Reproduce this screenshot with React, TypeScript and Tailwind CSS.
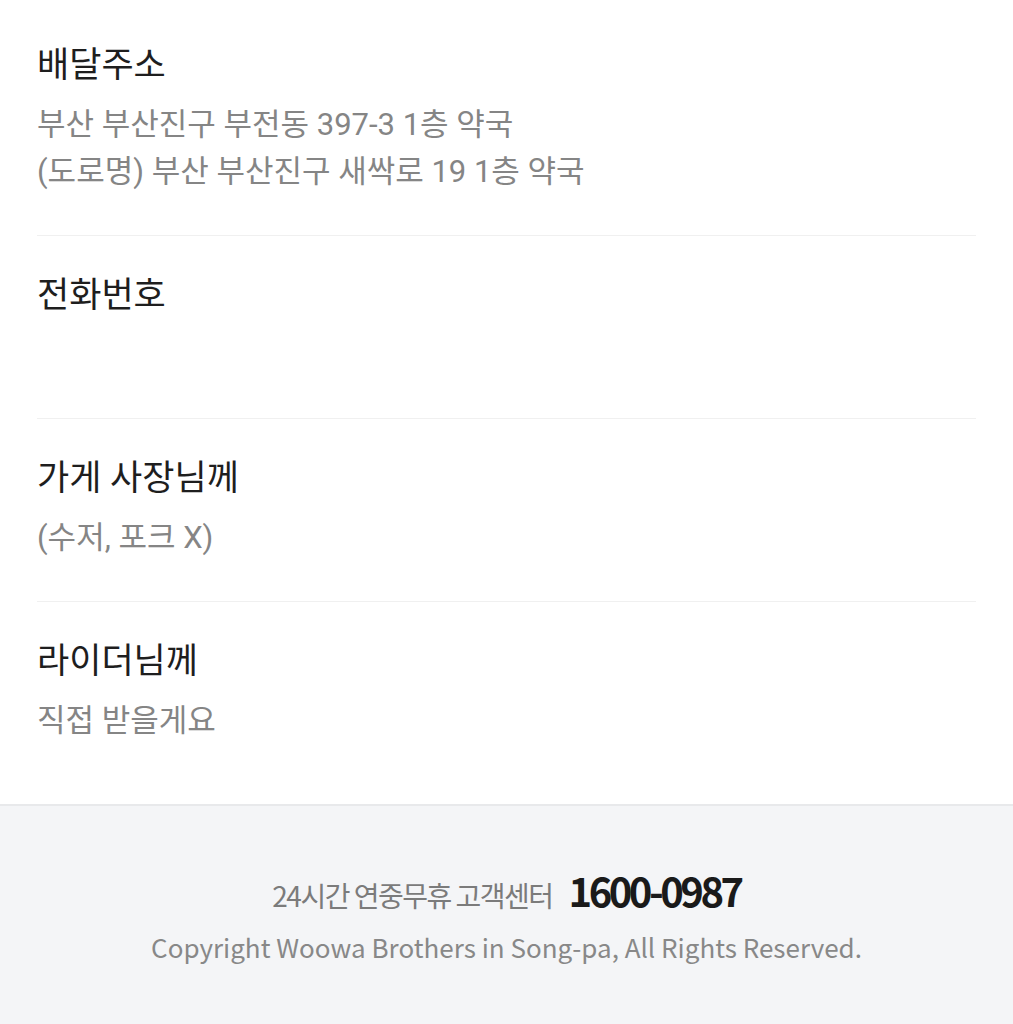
const FONT = "font-['Roboto','Noto_Sans_CJK_KR',sans-serif]";
const FOOT = "font-['Noto_Sans_CJK_KR','Noto_Sans',sans-serif]";

interface Section {
  title: string;
  lines: string[];
}

const sections: Section[] = [
  {
    title: '배달주소',
    lines: ['부산 부산진구 부전동 397-3 1층 약국', '(도로명) 부산 부산진구 새싹로 19 1층 약국'],
  },
  // 전화번호는 가려져 있으므로 빈 줄
  { title: '전화번호', lines: [''] },
  { title: '가게 사장님께', lines: ['(수저, 포크 X)'] },
  { title: '라이더님께', lines: ['직접 받을게요'] },
];

export default function App() {
  return (
    <div className="min-h-screen bg-white flex flex-col">
      <div className={`px-[37px] ${FONT}`}>
        {sections.map((s, i) => (
          <div
            key={s.title}
            className={`${i === 0 ? 'pt-[42px]' : 'pt-[36px]'} ${
              i === sections.length - 1 ? 'pb-[60px]' : 'pb-[40px] border-b border-[#f0f0f0]'
            }`}
          >
            <h2 className="text-[35px] leading-[48px] text-[#1e1e1e] font-normal">{s.title}</h2>
            <div className="mt-[11px]">
              {s.lines.map((line, j) => (
                <p key={j} className="text-[31px] leading-[47px] h-[47px] text-[#858585]">
                  {line}
                </p>
              ))}
            </div>
          </div>
        ))}
      </div>

      {/* Footer */}
      <footer className={`flex-1 bg-[#f4f5f7] border-t-2 border-[#e8e9eb] flex flex-col items-center pt-[60px] pb-[60px] ${FOOT}`}>
        <div className="flex items-baseline gap-[16px] leading-[48px]">
          <span className="text-[28px] text-[#7b7b7b] tracking-[-1.5px]">24시간 연중무휴 고객센터</span>
          <span className="text-[40px] font-bold text-[#1a1a1a] tracking-[-3.5px]">1600-0987</span>
        </div>
        <p className="mt-[12px] text-[26px] leading-[32px] text-[#888888]">
          Copyright Woowa Brothers in Song-pa, All Rights Reserved.
        </p>
      </footer>
    </div>
  );
}
